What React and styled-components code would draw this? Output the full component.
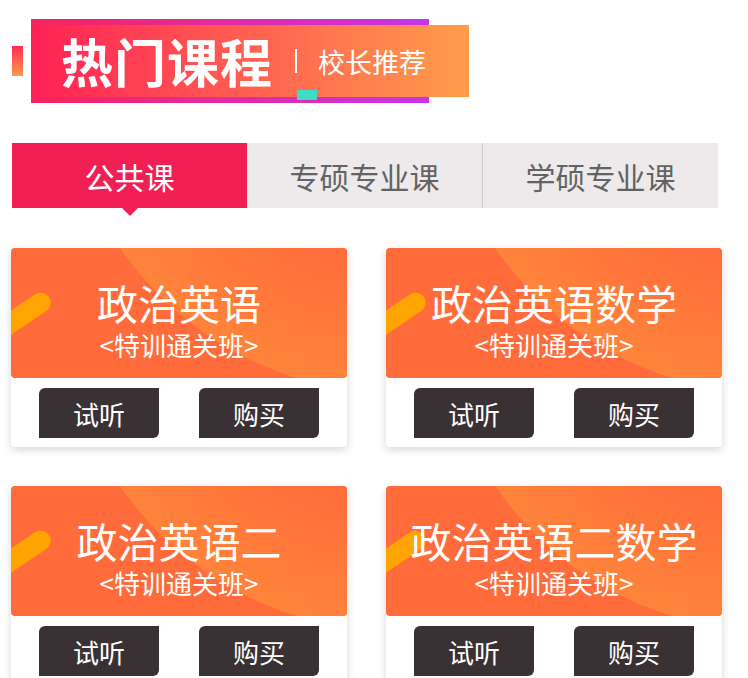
import React from 'react';
import styled, { createGlobalStyle } from 'styled-components';

const GlobalStyle = createGlobalStyle`
  body {
    margin: 0;
    background: #fff;
    font-family: "Noto Sans CJK SC", "Noto Sans", sans-serif;
  }
`;

const Page = styled.div`
  width: 748px;
  padding-top: 19px;
`;

const Header = styled.div`
  display: flex;
  align-items: flex-start;
  padding-left: 12px;
  height: 84px;
`;

const SideMark = styled.div`
  width: 11px;
  height: 30px;
  margin-top: 27px;
  background: linear-gradient(180deg, #ff2a55, #ff9a4c);
`;

const BannerFrame = styled.div`
  position: relative;
  margin-left: 8px;
  width: 398px;
  height: 84px;
  padding-top: 6px;
  box-sizing: border-box;
  background: linear-gradient(90deg, #f7245a, #c833ec);

  &::after {
    content: '';
    position: absolute;
    left: 266px;
    top: 71px;
    width: 20px;
    height: 10px;
    background: #3ddcc6;
  }
`;

const Banner = styled.div`
  display: flex;
  align-items: center;
  width: 438px;
  height: 72px;
  padding-left: 30px;
  box-sizing: border-box;
  background: linear-gradient(90deg, #ff2155 0%, #ff5a52 45%, #ff9d4a 100%);
  color: #fff;
`;

const BannerTitle = styled.span`
  font-size: 52px;
  font-weight: 700;
  line-height: 1;
  letter-spacing: 1px;
`;

const Divider = styled.span`
  width: 2px;
  height: 24px;
  margin-left: 22px;
  background: #fff;
`;

const BannerSub = styled.span`
  margin-left: 21px;
  font-size: 27px;
  line-height: 1;
`;

const Tabs = styled.div`
  display: flex;
  margin: 40px 0 0 12px;
  width: 706px;
  height: 65px;
`;

const Tab = styled.div`
  position: relative;
  flex: 1;
  display: flex;
  align-items: center;
  justify-content: center;
  font-size: 30px;
  color: ${p => (p.$active ? '#fff' : '#636363')};
  background: ${p => (p.$active ? '#f21f55' : '#eeeaeb')};
  border-left: ${p => (p.$divided ? '1px solid #cfcbcc' : 'none')};

  &::after {
    content: '';
    display: ${p => (p.$active ? 'block' : 'none')};
    position: absolute;
    left: 50%;
    bottom: -8px;
    margin-left: -8px;
    border-left: 8px solid transparent;
    border-right: 8px solid transparent;
    border-top: 8px solid #f21f55;
  }
`;

const Grid = styled.div`
  display: grid;
  grid-template-columns: 336px 336px;
  column-gap: 39px;
  row-gap: 39px;
  margin: 40px 0 0 11px;
`;

const Card = styled.div`
  height: 199px;
  background: #fff;
  border-radius: 4px;
  box-shadow: 0 3px 8px rgba(0, 0, 0, 0.16);
`;

const CardTop = styled.div`
  position: relative;
  overflow: hidden;
  height: 130px;
  border-radius: 4px;
  background: #ff6b3b;
  color: #fff;
  text-align: center;
  padding-top: 32px;
  box-sizing: border-box;
`;

const Glow = styled.div`
  position: absolute;
  left: 50px;
  top: -525px;
  width: 670px;
  height: 670px;
  border-radius: 50%;
  background: radial-gradient(circle closest-side, #ff6a3b 55%, #ff843a 100%);
`;

const Streak = styled.div`
  position: absolute;
  left: -34px;
  top: 39px;
  width: 72px;
  height: 20px;
  border-radius: 10px;
  background: #ffa400;
  transform: rotate(-34deg);
  transform-origin: right center;
`;

const CardTitle = styled.div`
  position: relative;
  font-size: 41px;
  line-height: 44px;
`;

const CardSub = styled.div`
  position: relative;
  margin-top: 6px;
  font-size: 26px;
  line-height: 30px;
`;

const Actions = styled.div`
  display: flex;
  justify-content: center;
  gap: 40px;
  padding-top: 10px;
`;

const Button = styled.div`
  width: 120px;
  height: 50px;
  display: flex;
  align-items: center;
  justify-content: center;
  background: #3a3134;
  color: #fff;
  font-size: 26px;
  border-radius: 6px 0 6px 0;
`;

const tabs = ['公共课', '专硕专业课', '学硕专业课'];
const courses = ['政治英语', '政治英语数学', '政治英语二', '政治英语二数学'];

export default function App() {
  return (
    <Page>
      <GlobalStyle />
      <Header>
        <SideMark />
        <BannerFrame>
          <Banner>
            <BannerTitle>热门课程</BannerTitle>
            <Divider />
            <BannerSub>校长推荐</BannerSub>
          </Banner>
        </BannerFrame>
      </Header>
      <Tabs>
        {tabs.map((t, i) => (
          <Tab key={t} $active={i === 0} $divided={i > 1}>{t}</Tab>
        ))}
      </Tabs>
      <Grid>
        {courses.map(c => (
          <Card key={c}>
            <CardTop>
              <Glow />
              <Streak />
              <CardTitle>{c}</CardTitle>
              <CardSub>&lt;特训通关班&gt;</CardSub>
            </CardTop>
            <Actions>
              <Button>试听</Button>
              <Button>购买</Button>
            </Actions>
          </Card>
        ))}
      </Grid>
    </Page>
  );
}
